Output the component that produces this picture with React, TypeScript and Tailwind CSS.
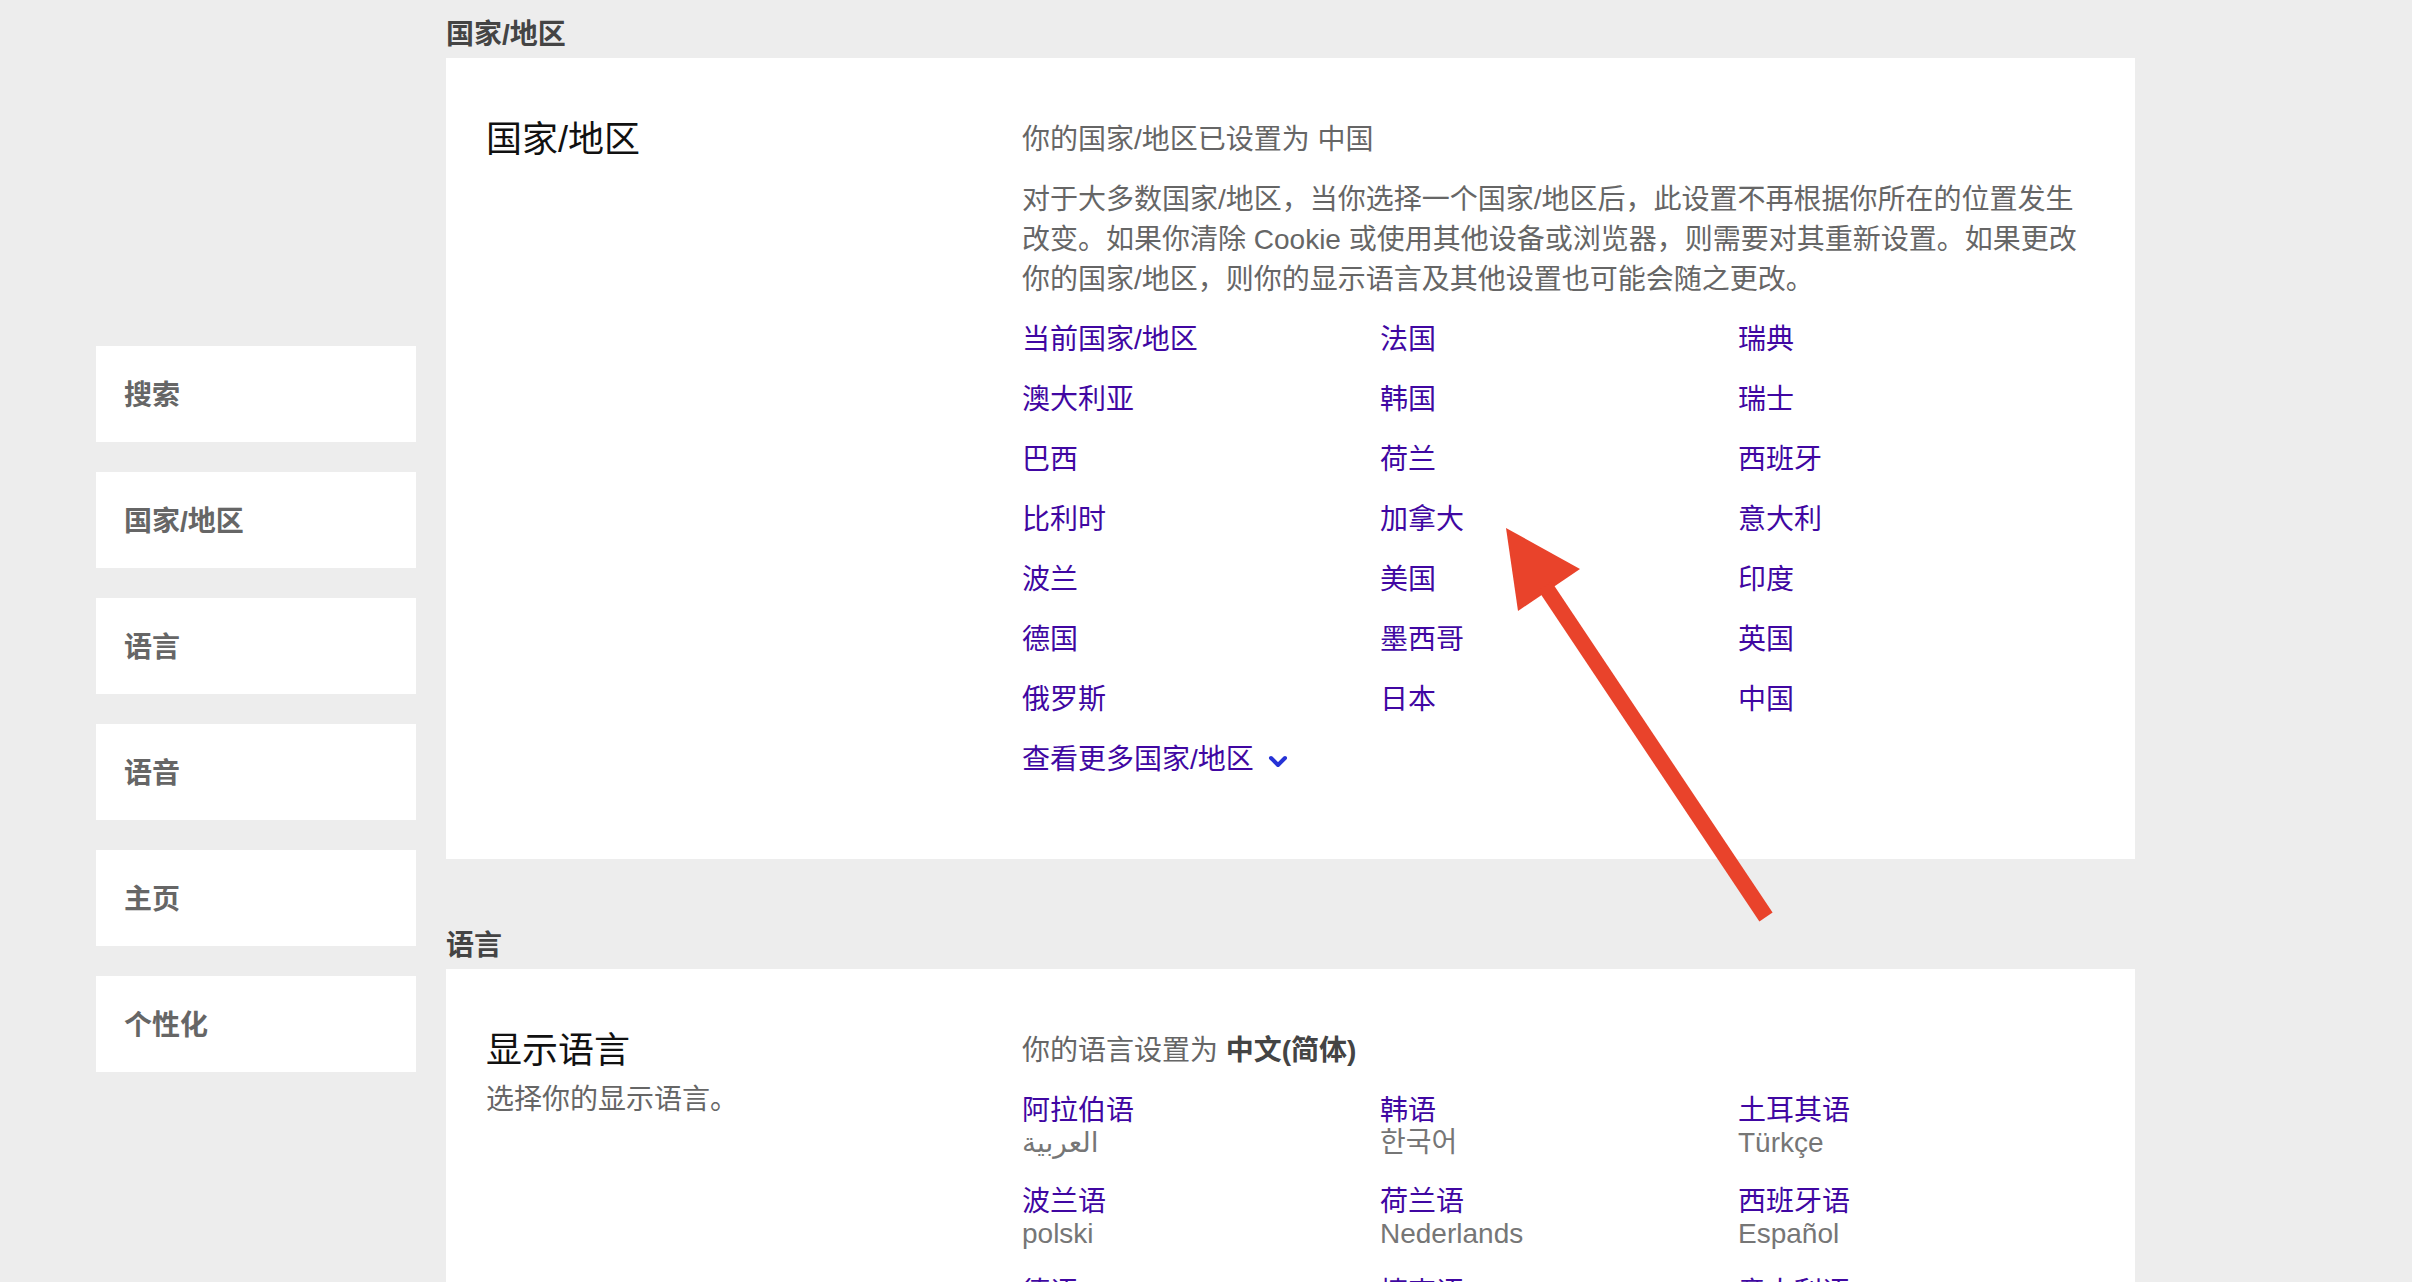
import React from "react";

const sidebar = ["搜索", "国家/地区", "语言", "语音", "主页", "个性化"];

const countries = [
  "当前国家/地区", "法国", "瑞典",
  "澳大利亚", "韩国", "瑞士",
  "巴西", "荷兰", "西班牙",
  "比利时", "加拿大", "意大利",
  "波兰", "美国", "印度",
  "德国", "墨西哥", "英国",
  "俄罗斯", "日本", "中国",
];

const languages: [string, string][] = [
  ["阿拉伯语", "العربية"],
  ["韩语", "한국어"],
  ["土耳其语", "Türkçe"],
  ["波兰语", "polski"],
  ["荷兰语", "Nederlands"],
  ["西班牙语", "Español"],
  ["德语", "Deutsch"],
  ["捷克语", "čeština"],
  ["意大利语", "Italiano"],
];

function SectionTitle({ children }: { children: React.ReactNode }) {
  return (
    <div className="h-[58px] pt-[15px] text-[28px] leading-[40px] font-bold text-[#444444]">
      {children}
    </div>
  );
}

export default function App() {
  return (
    <div className="relative min-h-[1282px] w-full overflow-hidden bg-[#ededed] font-['Liberation_Sans','Noto_Sans_CJK_SC','DejaVu_Sans',sans-serif]">
      <div className="flex pl-[96px]">
        <nav className="mt-[346px] flex w-[320px] shrink-0 flex-col gap-[30px]">
          {sidebar.map((s) => (
            <div
              key={s}
              className="flex h-[96px] items-center bg-white pl-[28px] pt-[3px] text-[28px] font-bold text-[#666666]"
            >
              {s}
            </div>
          ))}
        </nav>

        <main className="ml-[30px] w-[1689px] shrink-0">
          <SectionTitle>国家/地区</SectionTitle>
          <section className="flex bg-white pt-[58px] pb-[79px]">
            <div className="w-[576px] shrink-0 pl-[40px]">
              <h1 className="text-[36px] leading-[48px] font-normal text-[#111111]">国家/地区</h1>
            </div>
            <div className="w-[1074px] pt-[4px]">
              <p className="text-[28px] leading-[40px] text-[#666666]">你的国家/地区已设置为 中国</p>
              <p className="mt-[20px] text-[28px] leading-[40px] text-[#666666]">
                对于大多数国家/地区，当你选择一个国家/地区后，此设置不再根据你所在的位置发生改变。如果你清除 Cookie 或使用其他设备或浏览器，则需要对其重新设置。如果更改你的国家/地区，则你的显示语言及其他设置也可能会随之更改。
              </p>
              <div className="mt-[20px] grid grid-cols-3 gap-y-[20px]">
                {countries.map((c) => (
                  <a key={c} className="text-[28px] leading-[40px] text-[#4007a2]">
                    {c}
                  </a>
                ))}
                <a className="col-span-3 flex items-center text-[28px] leading-[40px] text-[#4007a2]">
                  查看更多国家/地区
                  <svg className="ml-[14px] mt-[4px]" width="20" height="14" viewBox="0 0 20 14">
                    <path d="M3 3 L10 10 L17 3" fill="none" stroke="#2633d6" strokeWidth="4" strokeLinecap="round" strokeLinejoin="round" />
                  </svg>
                </a>
              </div>
            </div>
          </section>

          <div className="mt-[52px]">
            <SectionTitle>语言</SectionTitle>
          </div>
          <section className="flex bg-white pt-[58px] pb-[60px]">
            <div className="w-[576px] shrink-0 pl-[40px]">
              <h1 className="text-[36px] leading-[48px] font-normal text-[#111111]">显示语言</h1>
              <p className="mt-[5px] text-[28px] leading-[40px] text-[#666666]">选择你的显示语言。</p>
            </div>
            <div className="w-[1074px] pt-[4px]">
              <p className="text-[28px] leading-[40px] text-[#666666]">
                你的语言设置为 <span className="font-bold text-[#444444]">中文(简体)</span>
              </p>
              <div className="mt-[20px] grid grid-cols-3 gap-y-[23px]">
                {languages.map(([n, native]) => (
                  <div key={n} className="flex flex-col">
                    <a className="text-[28px] leading-[40px] text-[#4007a2]">{n}</a>
                    <span className="-mt-[5px] text-[28px] leading-[33px] text-[#767676]">{native}</span>
                  </div>
                ))}
              </div>
            </div>
          </section>
        </main>
      </div>

      <svg
        className="pointer-events-none absolute left-0 top-0"
        width="2412"
        height="1282"
        viewBox="0 0 2412 1282"
      >
        <polygon points="1506,528 1580,569 1518,611" fill="#e9432b" />
        <polygon points="1551.6,581.8 1772.6,912.6 1759.4,921.4 1538.3,590.6" fill="#e9432b" />
      </svg>
    </div>
  );
}
